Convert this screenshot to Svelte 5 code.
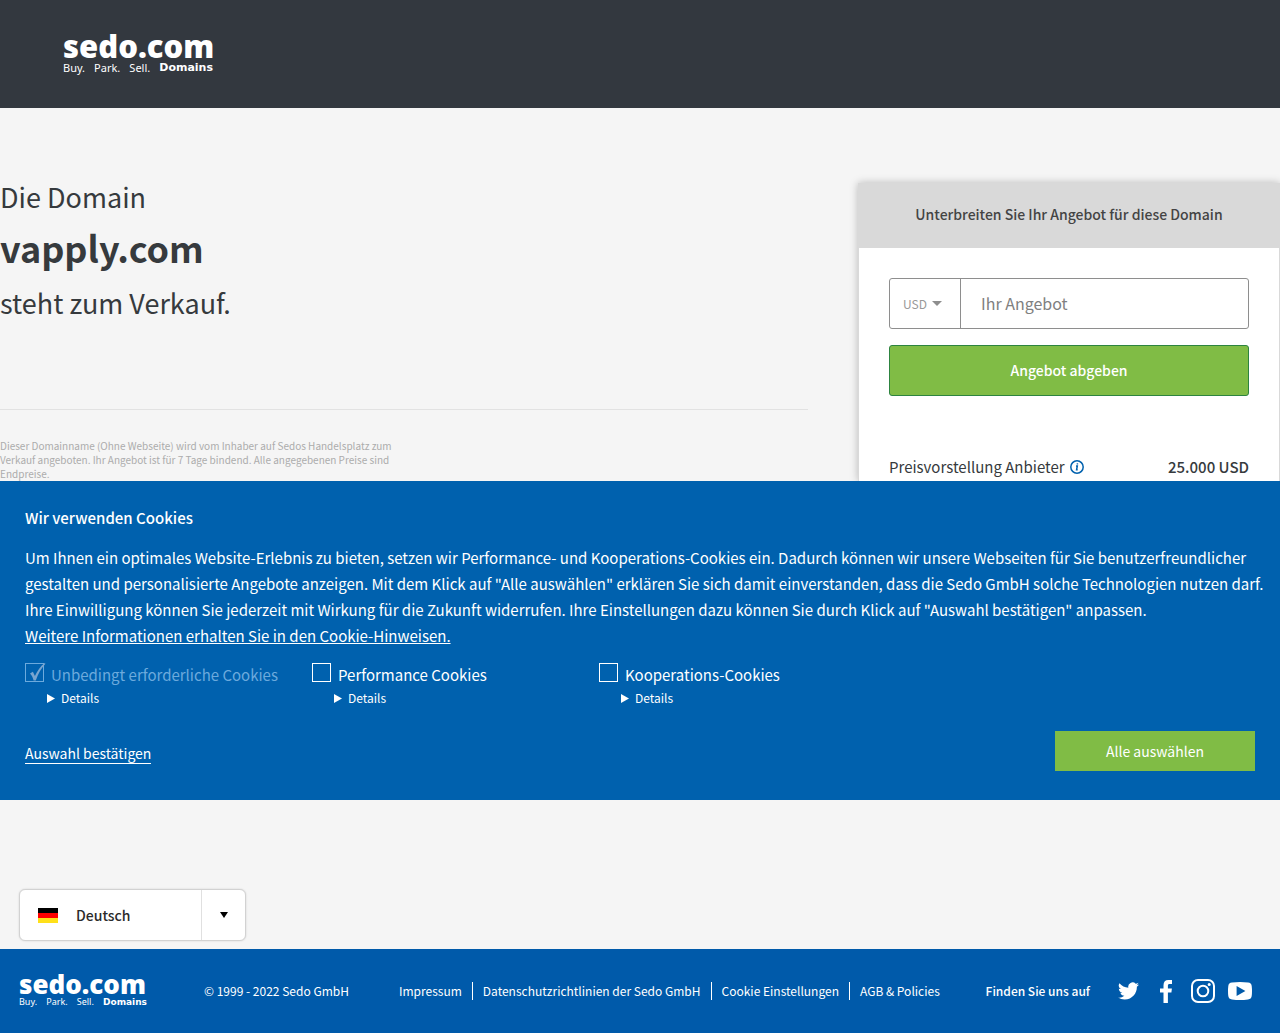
<script>
	let offer = $state('')
	let currency = $state('USD')
	let language = $state('de')

	let cookies = $state([
		{ id: 'required', label: 'Unbedingt erforderliche Cookies', checked: true, disabled: true },
		{ id: 'performance', label: 'Performance Cookies', checked: false, disabled: false },
		{ id: 'cooperation', label: 'Kooperations-Cookies', checked: false, disabled: false }
	])

	const links = [
		'Impressum',
		'Datenschutzrichtlinien der Sedo GmbH',
		'Cookie Einstellungen',
		'AGB & Policies'
	]

	function selectAll() {
		for (const cookie of cookies) cookie.checked = true
	}
</script>

{#snippet logo(small)}
	<a class="logo" class:small href="/">
		<span class="name">sedo.com</span>
		<span class="tagline">
			<span>Buy.</span>
			<span>Park.</span>
			<span>Sell.</span>
			<b>Domains</b>
		</span>
	</a>
{/snippet}

<header>
	{@render logo(false)}
</header>

<main>
	<section class="hero">
		<div class="intro">
			<h1>
				<span>Die Domain</span>
				<strong>vapply.com</strong>
				<span>steht zum Verkauf.</span>
			</h1>
			<p class="disclaimer">
				Dieser Domainname (Ohne Webseite) wird vom Inhaber auf Sedos Handelsplatz zum Verkauf
				angeboten. Ihr Angebot ist für 7 Tage bindend. Alle angegebenen Preise sind Endpreise.
			</p>
		</div>

		<form class="card" onsubmit={(e) => e.preventDefault()}>
			<h2>Unterbreiten Sie Ihr Angebot für diese Domain</h2>
			<div class="card-body">
				<div class="offer">
					<div class="currency">
						<select bind:value={currency} aria-label="Währung">
							<option>USD</option>
						</select>
						<svg width="10" height="5" viewBox="0 0 10 5" aria-hidden="true"><path d="M0 0h10L5 5z" /></svg>
					</div>
					<input type="text" placeholder="Ihr Angebot" aria-label="Ihr Angebot" bind:value={offer} />
				</div>
				<button class="submit">Angebot abgeben</button>
				<div class="price">
					<span>Preisvorstellung Anbieter</span>
					<svg width="14" height="14" viewBox="0 0 14 14" aria-hidden="true">
						<circle cx="7" cy="7" r="6.2" />
						<path d="M6 5.9h1.3l-.7 3.9h1.1" />
						<path d="M7.4 3.3v1.2" />
					</svg>
					<strong>25.000 USD</strong>
				</div>
			</div>
		</form>
	</section>

	<section class="cookies">
		<h2>Wir verwenden Cookies</h2>
		<p>
			Um Ihnen ein optimales Website-Erlebnis zu bieten, setzen wir Performance- und
			Kooperations-Cookies ein. Dadurch können wir unsere Webseiten für Sie benutzerfreundlicher
			gestalten und personalisierte Angebote anzeigen. Mit dem Klick auf "Alle auswählen" erklären
			Sie sich damit einverstanden, dass die Sedo GmbH solche Technologien nutzen darf. Ihre
			Einwilligung können Sie jederzeit mit Wirkung für die Zukunft widerrufen. Ihre Einstellungen
			dazu können Sie durch Klick auf "Auswahl bestätigen" anpassen.<br />
			<a href="/cookies">Weitere Informationen erhalten Sie in den Cookie-Hinweisen.</a>
		</p>
		<div class="choices">
			{#each cookies as cookie (cookie.id)}
				<div class="choice">
					<label class:disabled={cookie.disabled}>
						<input type="checkbox" bind:checked={cookie.checked} disabled={cookie.disabled} />
						<span>{cookie.label}</span>
						{#if cookie.checked}
							<svg class="tick" width="17" height="18" viewBox="0 0 17 18" aria-hidden="true">
								<path d="M1 10.6l2.9-1.8 2 4.2C8.4 7.6 11.5 3.2 15.8 0l.6.7C12 5.5 9.3 10.5 6.8 17.4H4.6C3.9 14.8 2.8 12.3 1 10.6z" />
							</svg>
						{/if}
					</label>
					<button class="details">
						<svg width="8" height="9" viewBox="0 0 8 9" aria-hidden="true"><path d="M0 0l8 4.5L0 9z" /></svg>
						Details
					</button>
				</div>
			{/each}
		</div>
		<div class="actions">
			<button class="confirm">Auswahl bestätigen</button>
			<button class="all" onclick={selectAll}>Alle auswählen</button>
		</div>
	</section>

	<div class="language">
		<div class="language-box">
			<svg class="flag" width="20" height="15" viewBox="0 0 20 15" aria-hidden="true">
				<rect width="20" height="5" fill="#000" />
				<rect y="5" width="20" height="5" fill="#f00" />
				<rect y="10" width="20" height="5" fill="#ffe01a" />
			</svg>
			<select bind:value={language} aria-label="Sprache">
				<option value="de">Deutsch</option>
			</select>
			<span class="toggle">
				<svg width="8" height="6" viewBox="0 0 8 6" aria-hidden="true"><path d="M0 0h8L4 6z" /></svg>
			</span>
		</div>
	</div>
</main>

<footer>
	{@render logo(true)}
	<span class="copyright">© 1999 - 2022 Sedo GmbH</span>
	<nav>
		{#each links as link}
			<a href="/">{link}</a>
		{/each}
	</nav>
	<div class="social">
		<span>Finden Sie uns auf</span>
		<a class="twitter" href="/" aria-label="Twitter">
			<svg width="21" height="18" viewBox="0 2 24 20">
				<path d="M24 4.56a9.8 9.8 0 0 1-2.83.78 4.93 4.93 0 0 0 2.17-2.73 9.9 9.9 0 0 1-3.13 1.2 4.92 4.92 0 0 0-8.38 4.48A13.97 13.97 0 0 1 1.67 3.15a4.93 4.93 0 0 0 1.52 6.57 4.9 4.9 0 0 1-2.23-.61v.06a4.92 4.92 0 0 0 3.95 4.83 4.9 4.9 0 0 1-2.22.08 4.92 4.92 0 0 0 4.6 3.42A9.87 9.87 0 0 1 0 19.54a13.94 13.94 0 0 0 7.55 2.21c9.05 0 14-7.5 14-14v-.63A10 10 0 0 0 24 4.56z" />
			</svg>
		</a>
		<a class="facebook" href="/" aria-label="Facebook">
			<svg width="12" height="23" viewBox="0 0 12 23">
				<path d="M3.5 23V12.6H0V8.4h3.5V5.2C3.5 1.9 5.3 0 8.3 0H12v4H9.7C8.4 4 7.9 4.6 7.9 5.8v2.6h4l-.5 4.2H7.9V23z" />
			</svg>
		</a>
		<a class="instagram" href="/" aria-label="Instagram">
			<svg width="24" height="24" viewBox="0 0 24 24">
				<rect x="1" y="1" width="22" height="22" rx="6" />
				<circle cx="12" cy="12" r="5.3" />
				<circle class="dot" cx="18.2" cy="5.6" r="1.5" />
			</svg>
		</a>
		<a class="youtube" href="/" aria-label="YouTube">
			<svg width="24" height="18" viewBox="0 0 24 18">
				<path fill-rule="evenodd" d="M4 .6Q12-.4 20 .6q3.4.3 3.7 3.4.6 5 0 10-.3 3.1-3.7 3.4-8 1-16 0Q.6 17.1.3 14q-.6-5 0-10Q.6.9 4 .6zM8.6 4v10l8.8-5z" />
			</svg>
		</a>
	</div>
</footer>

<style>
	:global(body) {
		background: #f5f5f5;
		color: #363a3d;
		font-family: "Noto Sans CJK SC", "Open Sans", sans-serif;
	}

	h1, h2, p {
		margin: 0;
	}

	button, input, select {
		margin: 0;
		padding: 0;
		border: 0;
		border-radius: 0;
		background: none;
		color: inherit;
		font: inherit;
	}

	select {
		appearance: none;
	}

	button {
		cursor: pointer;
	}

	svg {
		display: block;
		flex: none;
	}

	a {
		color: inherit;
	}

	header {
		display: flex;
		padding: 32px 63px 33px;
		background: #33383f;
	}

	.logo {
		width: 150px;
		color: #fff;
		text-decoration: none;
	}

	.logo .name {
		display: block;
		font: 800 31px/28px "Open Sans", sans-serif;
	}

	.tagline {
		display: flex;
		justify-content: space-between;
		font: 11px/15px "Noto Sans", sans-serif;
	}

	.tagline b {
		font-family: "DejaVu Sans", sans-serif;
	}

	.logo.small {
		width: 128px;
	}

	.logo.small .name {
		font-size: 26px;
		line-height: 22px;
	}

	.logo.small .tagline {
		font-size: 9px;
		line-height: 14px;
	}

	.hero {
		display: grid;
		grid-template-columns: 1fr 422px;
		gap: 50px;
		overflow: hidden;
		padding-top: 62px;
	}

	h1 {
		padding-bottom: 80px;
		border-bottom: 1px solid #e2e2e2;
		font-size: 27px;
		font-weight: 400;
		line-height: 53px;
	}

	h1 span, h1 strong {
		display: block;
	}

	h1 strong {
		padding-bottom: 4px;
		font-size: 36px;
		font-weight: 700;
		line-height: 49px;
	}

	.disclaimer {
		max-width: 400px;
		margin-top: 29px;
		color: #acacac;
		font-size: 10px;
		line-height: 14px;
	}

	.card {
		margin-top: 13px;
		border: 1px solid #d9d9d9;
		border-bottom: 0;
		box-sizing: border-box;
		background: #fff;
		box-shadow: 0 0 8px rgba(0, 0, 0, 0.25);
	}

	.card h2 {
		padding-bottom: 4px;
		background: #d9d9d9;
		color: #444;
		font-size: 14px;
		font-weight: 500;
		line-height: 60px;
		text-align: center;
	}

	.card-body {
		padding: 30px 30px 0;
	}

	.offer {
		display: flex;
		border: 1px solid #8e8e8e;
		border-radius: 3px;
	}

	.currency {
		display: flex;
		align-items: center;
		gap: 5px;
		padding: 0 18px 0 13px;
		border-right: 1px solid #8e8e8e;
		color: #999;
		font-size: 12px;
		line-height: 49px;
	}

	.currency svg {
		fill: #8e8e8e;
	}

	.offer input {
		flex: 1;
		min-width: 0;
		padding: 0 20px 2px;
		font-size: 16px;
	}

	.offer input::placeholder {
		color: #808080;
	}

	.submit {
		width: 100%;
		margin-top: 16px;
		border: 1px solid #2d8440;
		border-radius: 3px;
		background: #80bc45;
		color: #fff;
		font-size: 14px;
		font-weight: 500;
		line-height: 49px;
	}

	.price {
		display: flex;
		align-items: center;
		gap: 5px;
		margin-top: 57px;
		font-size: 15px;
		line-height: 27px;
	}

	.price svg {
		fill: none;
		stroke: #0061ae;
		stroke-width: 1.5;
	}

	.price strong {
		margin-left: auto;
		font-weight: 500;
	}

	.cookies {
		position: relative;
		padding: 24px 25px 29px;
		background: #0061ae;
		color: #fff;
		font-size: 15px;
		line-height: 26px;
	}

	.cookies h2 {
		font-size: 15px;
		font-weight: 500;
		line-height: 26px;
	}

	.cookies p {
		margin: 14px -15px 0 0;
	}

	.choices {
		display: flex;
		margin-top: 13px;
	}

	.choice {
		width: 287px;
	}

	.choice label {
		position: relative;
		display: flex;
		align-items: flex-start;
		gap: 7px;
		line-height: 25px;
		white-space: nowrap;
	}

	.choice input {
		appearance: none;
		box-sizing: border-box;
		width: 19px;
		height: 19px;
		margin-top: 1px;
		border: 1px solid #fff;
	}

	.choice .disabled {
		color: #6caadd;
	}

	.choice .disabled input {
		border-color: #6caadd;
	}

	.tick {
		position: absolute;
		top: 1px;
		left: 4px;
		fill: #7aa5cf;
	}

	.details {
		display: flex;
		align-items: center;
		gap: 6px;
		margin-left: 22px;
		font-size: 12px;
		line-height: 22px;
	}

	.details svg {
		fill: #fff;
	}

	.actions {
		display: flex;
		align-items: center;
		justify-content: space-between;
		margin-top: 22px;
	}

	.confirm {
		margin-top: 4px;
		border-bottom: 1px solid #fff;
		font-size: 14px;
		line-height: 20px;
	}

	.all {
		width: 200px;
		background: #80bc45;
		font-size: 14px;
		line-height: 40px;
	}

	.language {
		padding: 89px 19px 8px;
	}

	.language-box {
		display: flex;
		align-items: center;
		box-sizing: border-box;
		width: 227px;
		border: 1px solid #d2d2d2;
		border-radius: 6px;
		background: #fff;
		box-shadow: 0 0 2px rgba(0, 0, 0, 0.15);
	}

	.flag {
		margin-left: 18px;
	}

	.language-box select {
		flex: 1;
		height: 50px;
		padding-left: 18px;
		color: #2b2b2b;
		font-size: 14px;
		font-weight: 500;
	}

	.toggle {
		display: flex;
		align-items: center;
		justify-content: center;
		width: 43px;
		height: 50px;
		border-left: 1px solid #e0e0e0;
	}

	footer {
		display: flex;
		align-items: center;
		box-sizing: border-box;
		padding: 24px 28px 24px 19px;
		background: #005aaa;
		color: #fff;
		font-size: 12px;
		line-height: 18px;
	}

	.copyright {
		margin-left: 57px;
	}

	nav {
		display: flex;
		margin-left: 40px;
	}

	nav a {
		padding: 0 10px;
		text-decoration: none;
	}

	nav a + a {
		border-left: 1px solid #fff;
	}

	.social {
		display: flex;
		align-items: center;
		margin-left: auto;
		fill: #fff;
	}

	.social span {
		font-weight: 500;
	}

	.twitter {
		margin-left: 28px;
	}

	.facebook {
		margin-left: 21px;
	}

	.instagram {
		margin-left: 19px;
	}

	.instagram svg {
		fill: none;
		stroke: #fff;
		stroke-width: 2;
	}

	.instagram .dot {
		fill: #fff;
		stroke: none;
	}

	.youtube {
		margin-left: 13px;
	}
</style>
